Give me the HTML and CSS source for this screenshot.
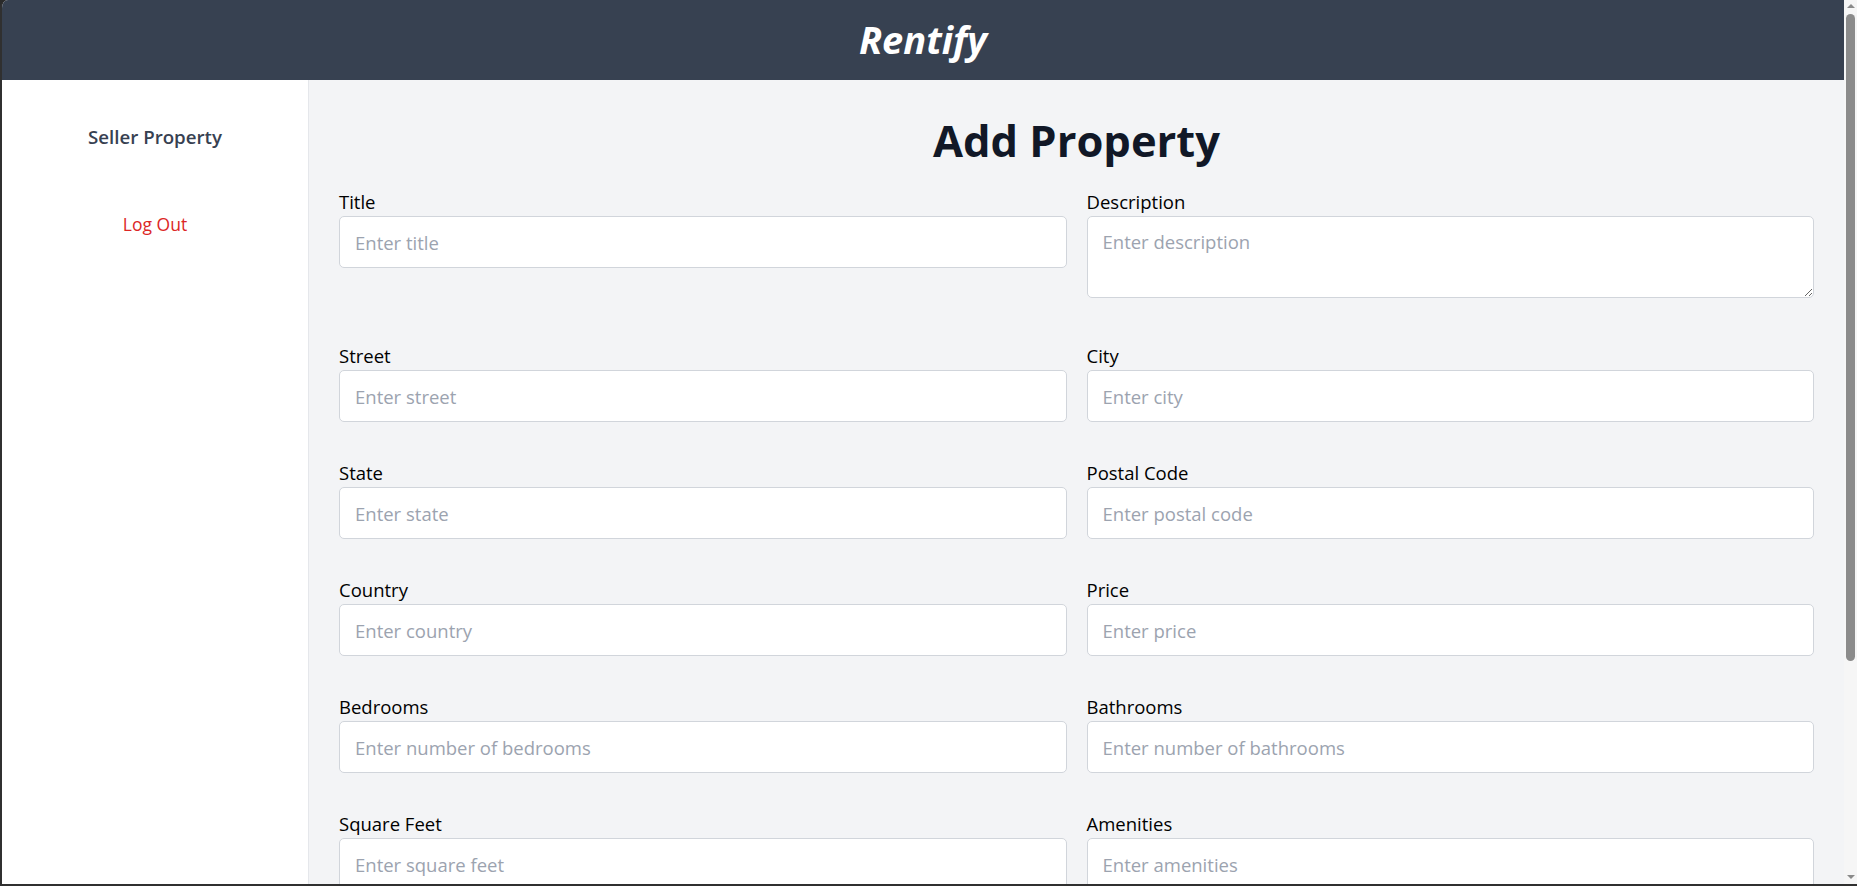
FILE: index.html
```html
<!DOCTYPE html>
<html lang="en">
<head>
<meta charset="utf-8">
<title>Rentify - Add Property</title>
<link rel="stylesheet" href="styles.css">
</head>
<body>
<div class="frame">
  <div class="app">
    <header class="topbar">
      <span class="brand">Rentify</span>
    </header>
    <div class="layout">
      <aside class="sidebar">
        <a class="side-link" href="#">Seller Property</a>
        <a class="side-logout" href="#">Log Out</a>
      </aside>
      <main class="content">
        <h1 class="page-title">Add Property</h1>
        <form class="form-grid">
          <div class="field">
            <label class="field-label">Title</label>
            <input class="field-input" type="text" placeholder="Enter title">
          </div>
          <div class="field">
            <label class="field-label">Description</label>
            <textarea class="field-input field-textarea" placeholder="Enter description"></textarea>
          </div>
          <div class="field">
            <label class="field-label">Street</label>
            <input class="field-input" type="text" placeholder="Enter street">
          </div>
          <div class="field">
            <label class="field-label">City</label>
            <input class="field-input" type="text" placeholder="Enter city">
          </div>
          <div class="field">
            <label class="field-label">State</label>
            <input class="field-input" type="text" placeholder="Enter state">
          </div>
          <div class="field">
            <label class="field-label">Postal Code</label>
            <input class="field-input" type="text" placeholder="Enter postal code">
          </div>
          <div class="field">
            <label class="field-label">Country</label>
            <input class="field-input" type="text" placeholder="Enter country">
          </div>
          <div class="field">
            <label class="field-label">Price</label>
            <input class="field-input" type="text" placeholder="Enter price">
          </div>
          <div class="field">
            <label class="field-label">Bedrooms</label>
            <input class="field-input" type="text" placeholder="Enter number of bedrooms">
          </div>
          <div class="field">
            <label class="field-label">Bathrooms</label>
            <input class="field-input" type="text" placeholder="Enter number of bathrooms">
          </div>
          <div class="field">
            <label class="field-label">Square Feet</label>
            <input class="field-input" type="text" placeholder="Enter square feet">
          </div>
          <div class="field">
            <label class="field-label">Amenities</label>
            <input class="field-input" type="text" placeholder="Enter amenities">
          </div>
        </form>
      </main>
    </div>
  </div>
  <div class="scrollbar">
    <span class="scroll-arrow scroll-up"></span>
    <div class="scroll-track"><div class="scroll-thumb"></div></div>
    <span class="scroll-arrow scroll-down"></span>
  </div>
</div>
</body>
</html>
```
FILE: styles.css
```css
* { box-sizing: border-box; }
html, body {
  margin: 0;
  height: 886px;
  overflow: hidden;
  background: #2a2a2a;
  font-family: "Open Sans", "Noto Sans", sans-serif;
}
.frame {
  display: flex;
  height: 886px;
  border-left: 2px solid #303030;
  border-bottom: 2px solid #303030;
  border-top-left-radius: 8px;
  overflow: hidden;
}
.app {
  flex: 1;
  display: flex;
  flex-direction: column;
  min-width: 0;
  background: #f3f4f6;
}
.topbar {
  height: 80px;
  flex: none;
  background: #374151;
  display: flex;
  align-items: center;
  justify-content: center;
}
.brand {
  color: #fff;
  font-size: 38px;
  font-weight: 700;
  font-style: italic;
  line-height: 46px;
  margin-top: -2px;
}
.layout {
  flex: 1;
  display: flex;
  min-height: 0;
}
.sidebar {
  width: 307px;
  flex: none;
  background: #fff;
  border-right: 1px solid #e5e7eb;
  display: flex;
  flex-direction: column;
  align-items: center;
  padding-top: 42px;
}
.side-link {
  color: #374151;
  font-size: 18.7px;
  font-weight: 600;
  text-decoration: none;
  line-height: 30px;
}
.side-logout {
  color: #dc2626;
  font-size: 17.5px;
  font-weight: 500;
  text-decoration: none;
  line-height: 30px;
  margin-top: 57px;
}
.content {
  flex: 1;
  padding: 36px 30px 0 30px;
  overflow: hidden;
}
.page-title {
  margin: 0 0 20px;
  text-align: center;
  font-size: 43.5px;
  line-height: 50px;
  font-weight: 700;
  color: #111827;
}
.form-grid {
  display: grid;
  grid-template-columns: 1fr 1fr;
  column-gap: 20px;
  row-gap: 35px;
}
.field {
  display: flex;
  flex-direction: column;
}
.field-label {
  font-size: 18.5px;
  line-height: 30px;
  padding-top: 1px;
  margin-bottom: -1px;
  color: #000;
}
.field-input {
  display: block;
  width: 100%;
  height: 52px;
  border: 1px solid #d1d5db;
  border-radius: 5px;
  background: #fff;
  padding: 10px 15px;
  font-family: inherit;
  font-size: 18.5px;
  line-height: 30px;
  color: #111827;
  outline: none;
}
.field-input::placeholder { color: #9ca3af; }
.field-textarea {
  height: 82px;
  resize: vertical;
  margin-bottom: 7px;
}
.scrollbar {
  width: 13px;
  flex: none;
  background: #f6f6f6;
  display: flex;
  flex-direction: column;
  align-items: center;
}
.scroll-arrow {
  width: 0;
  height: 0;
  border-left: 4px solid transparent;
  border-right: 4px solid transparent;
  flex: none;
}
.scroll-up {
  border-bottom: 4px solid #8a8a8a;
  margin: 4px 0 4px;
}
.scroll-down {
  border-top: 4px solid #8a8a8a;
  margin: 4px 0 5px;
}
.scroll-track {
  flex: 1;
  width: 100%;
  display: flex;
  justify-content: center;
}
.scroll-thumb {
  width: 9px;
  height: 647px;
  margin-top: 2px;
  background: #8b8b8b;
  border-radius: 5px;
}
```
